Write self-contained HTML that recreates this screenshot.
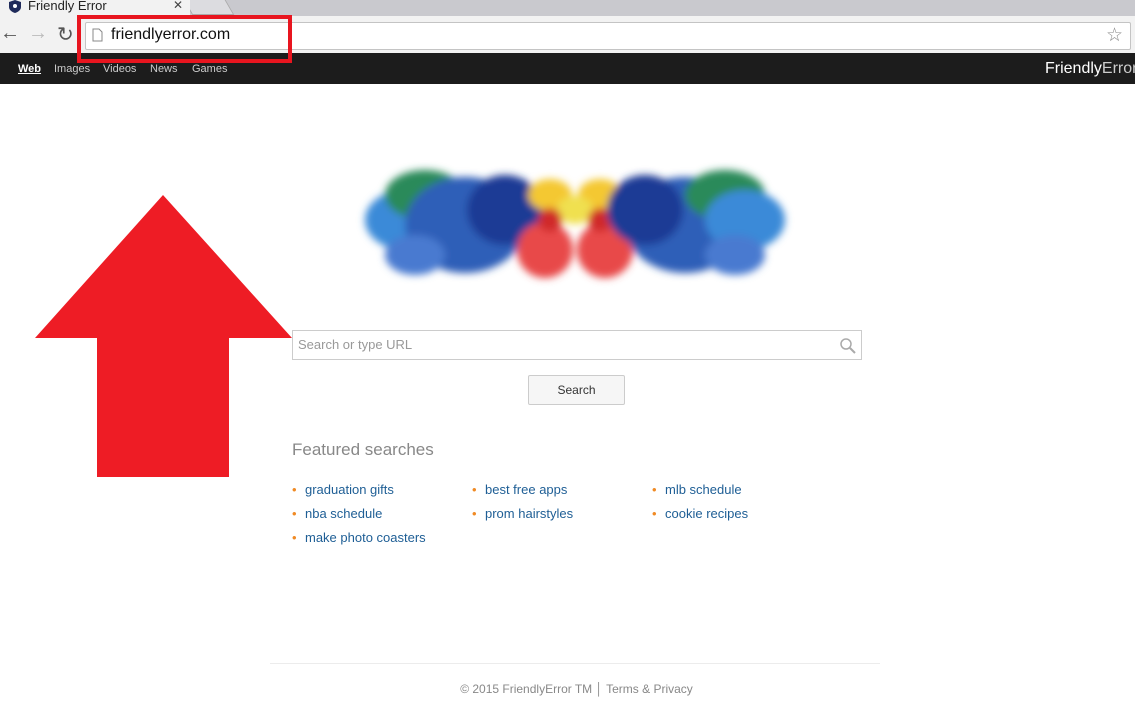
<!DOCTYPE html>
<html><head><style>
body{margin:0;width:1135px;height:711px;position:relative;overflow:hidden;background:#fff;font-family:"Liberation Sans",sans-serif}
.a{position:absolute}
.l span{color:#f08a24;display:inline-block;width:13px}
</style></head><body>
<div class="a" style="left:0;top:0;width:1135px;height:16px;background:#c9c9ce"></div>
<div class="a" style="left:188px;top:0;width:40px;height:14px;background:#dcdce0;border:1px solid #aaa;border-top:none;transform:skewX(30deg)"></div>
<div class="a" style="left:0;top:0;width:190px;height:16px;background:#f2f2f2"></div>
<svg class="a" style="left:9px;top:0" width="12" height="13"><path d="M6 0L12 2V7C12 10 9 12 6 13C3 12 0 10 0 7V2Z" fill="#1f2a5a"/><circle cx="6" cy="6" r="2" fill="#fff"/></svg>
<div class="a" style="left:28px;top:-2px;font-size:13px;color:#222">Friendly Error</div>
<div class="a" style="left:173px;top:-2px;font-size:12px;color:#444">✕</div>
<div class="a" style="left:0;top:16px;width:1135px;height:37px;background:#f2f2f2"></div>
<div class="a" style="left:0;top:22px;font-size:20px;color:#555">←</div>
<div class="a" style="left:28px;top:22px;font-size:20px;color:#bbb">→</div>
<div class="a" style="left:57px;top:22px;font-size:20px;color:#555">↻</div>
<div class="a" style="left:85px;top:22px;width:1044px;height:26px;background:#fff;border:1px solid #c4c4c4;border-radius:2px"></div>
<svg class="a" style="left:92px;top:28px" width="11" height="14"><path d="M1 1H7L10 4V13H1Z" fill="#fff" stroke="#888"/></svg>
<div class="a" style="left:111px;top:26px;font-size:16px;color:#111">friendlyerror.com</div>
<div class="a" style="left:1106px;top:24px;font-size:19px;color:#888">☆</div>
<div class="a" style="left:0;top:53px;width:1135px;height:31px;background:#1c1c1c"></div>
<div class="a" style="left:77px;top:15px;width:207px;height:40px;border:4px solid #e8151f"></div>
<div class="a" style="left:18px;top:63px;font-size:11px;color:#fff;font-weight:bold;text-decoration:underline">Web</div>
<div class="a" style="left:54px;top:63px;font-size:11px;color:#ccc">Images</div>
<div class="a" style="left:103px;top:63px;font-size:11px;color:#ccc">Videos</div>
<div class="a" style="left:150px;top:63px;font-size:11px;color:#ccc">News</div>
<div class="a" style="left:192px;top:63px;font-size:11px;color:#ccc">Games</div>
<div class="a" style="left:1045px;top:60px;font-size:16px;color:#fff">Friendly<span style="color:#ccc">Error</span></div>
<svg class="a" style="left:350px;top:150px" width="460" height="145">
<defs><filter id="b"><feGaussianBlur stdDeviation="4"/></filter></defs>
<g filter="url(#b)">
<ellipse cx="55" cy="70" rx="40" ry="30" fill="#3a8ad8"/>
<ellipse cx="75" cy="45" rx="40" ry="25" fill="#2a8a5a"/>
<ellipse cx="115" cy="75" rx="60" ry="48" fill="#2f5fb8"/>
<ellipse cx="155" cy="60" rx="38" ry="35" fill="#1f3a95"/>
<ellipse cx="65" cy="105" rx="30" ry="20" fill="#4a7ad0"/>
<ellipse cx="200" cy="45" rx="22" ry="16" fill="#f4c830"/>
<ellipse cx="250" cy="45" rx="22" ry="16" fill="#f4c830"/>
<ellipse cx="225" cy="60" rx="18" ry="14" fill="#f0e050"/>
<ellipse cx="195" cy="100" rx="28" ry="28" fill="#e84a4a"/>
<ellipse cx="255" cy="100" rx="28" ry="28" fill="#e84a4a"/>
<ellipse cx="200" cy="70" rx="12" ry="12" fill="#d02a2a"/>
<ellipse cx="250" cy="70" rx="12" ry="12" fill="#d02a2a"/>
<ellipse cx="335" cy="75" rx="60" ry="48" fill="#2f5fb8"/>
<ellipse cx="295" cy="60" rx="38" ry="35" fill="#1f3a95"/>
<ellipse cx="375" cy="45" rx="40" ry="25" fill="#2a8a5a"/>
<ellipse cx="395" cy="70" rx="40" ry="30" fill="#3a8ad8"/>
<ellipse cx="385" cy="105" rx="30" ry="20" fill="#4a7ad0"/>
</g></svg>
<svg class="a" style="left:0;top:0" width="300" height="480"><path d="M163 195L292 338H229V477H97V338H35Z" fill="#ee1c25"/></svg>
<div class="a" style="left:292px;top:330px;width:568px;height:28px;border:1px solid #ccc"></div>
<div class="a" style="left:298px;top:337px;font-size:13px;color:#999">Search or type URL</div>
<svg class="a" style="left:840px;top:338px" width="16" height="16"><circle cx="6" cy="6" r="5" fill="none" stroke="#aaa" stroke-width="1.5"/><path d="M10 10L15 15" stroke="#aaa" stroke-width="2"/></svg>
<div class="a" style="left:528px;top:375px;width:95px;height:28px;border:1px solid #ccc;border-radius:2px;background:#f6f6f6;font-size:12px;color:#333;text-align:center;line-height:28px">Search</div>
<div class="a" style="left:292px;top:440px;font-size:17px;color:#888">Featured searches</div>
<div class="a l" style="font-size:13px;color:#1e5e95;left:292px;top:478px;line-height:24px"><span>•</span>graduation gifts<br><span>•</span>nba schedule<br><span>•</span>make photo coasters</div>
<div class="a l" style="font-size:13px;color:#1e5e95;left:472px;top:478px;line-height:24px"><span>•</span>best free apps<br><span>•</span>prom hairstyles</div>
<div class="a l" style="font-size:13px;color:#1e5e95;left:652px;top:478px;line-height:24px"><span>•</span>mlb schedule<br><span>•</span>cookie recipes</div>
<div class="a" style="left:270px;top:663px;width:610px;height:1px;background:#ececec"></div>
<div class="a" style="left:0;width:1135px;top:682px;text-align:center;font-size:12px;color:#888;padding-left:18px;box-sizing:border-box">© 2015 FriendlyError TM │ Terms &amp; Privacy</div>
</body></html>
